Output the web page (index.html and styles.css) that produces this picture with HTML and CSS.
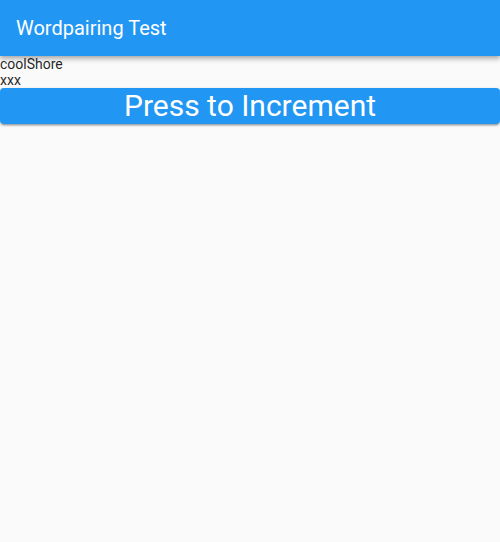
FILE: index.html
```html
<!DOCTYPE html>
<html>
<head>
<meta charset="utf-8">
<link rel="stylesheet" href="styles.css">
</head>
<body>
<header class="appbar"><span class="title">Wordpairing Test</span></header>
<main class="content">
<div class="line">coolShore</div>
<div class="line">xxx</div>
<button class="btn">Press to Increment</button>
</main>
</body>
</html>
```
FILE: styles.css
```css
html, body { margin: 0; padding: 0; }
body {
  width: 500px;
  height: 542px;
  background: #fafafa;
  font-family: Roboto, "Noto Sans", sans-serif;
  overflow: hidden;
}
.appbar {
  position: relative;
  z-index: 1;
  height: 56px;
  background: #2196f3;
  display: flex;
  align-items: center;
  padding: 0 16px;
  box-shadow: 0 2px 4px rgba(0,0,0,0.2), 0 4px 5px rgba(0,0,0,0.14);
}
.title {
  color: #fff;
  font-size: 20px;
  font-weight: 400;
}
.content { display: flex; flex-direction: column; }
.line {
  font-size: 14px;
  line-height: 16px;
  color: rgba(0,0,0,0.87);
}
.btn {
  height: 36px;
  margin: 0;
  border: none;
  border-radius: 4px;
  background: #2196f3;
  color: #fff;
  font-family: Roboto, "Noto Sans", sans-serif;
  font-size: 30px;
  line-height: 36px;
  padding: 0;
  box-shadow: 0 1px 3px rgba(0,0,0,0.2), 0 2px 2px rgba(0,0,0,0.14), 0 3px 1px -2px rgba(0,0,0,0.12);
}
```
